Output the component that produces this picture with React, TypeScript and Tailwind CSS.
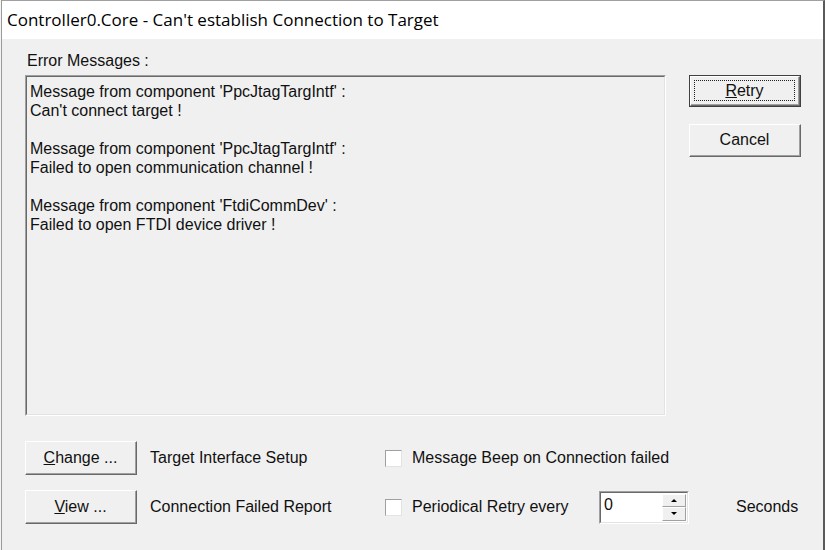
import React from "react";

const MESSAGES = [
  "Message from component 'PpcJtagTargIntf' :",
  "Can't connect target !",
  "",
  "Message from component 'PpcJtagTargIntf' :",
  "Failed to open communication channel !",
  "",
  "Message from component 'FtdiCommDev' :",
  "Failed to open FTDI device driver !",
];

function Button({ children, isDefault = false, className = "" }: { children: React.ReactNode; isDefault?: boolean; className?: string }) {
  return (
    <div className={`${isDefault ? "border border-[#404040]" : ""} ${className}`}>
      <div className="h-full border-t border-l border-white border-r border-b border-r-[#696969] border-b-[#696969] bg-[#f0f0f0]">
        <div className="h-full border-r border-b border-r-[#a0a0a0] border-b-[#a0a0a0] flex items-center justify-center p-[3px]">
          <div className={`w-full h-full flex items-center justify-center ${isDefault ? "border border-dotted border-[#202020]" : ""}`}>
            {children}
          </div>
        </div>
      </div>
    </div>
  );
}

function Sunken({ children, className = "" }: { children?: React.ReactNode; className?: string }) {
  return (
    <div className={`border-t border-l border-[#a0a0a0] border-r border-b border-r-white border-b-white ${className}`}>
      <div className="w-full h-full border-t border-l border-[#696969] border-r border-b border-r-[#e3e3e3] border-b-[#e3e3e3]">
        {children}
      </div>
    </div>
  );
}

function Checkbox({ label }: { label: string }) {
  return (
    <div className="flex items-center">
      <div className="w-[17px] h-[17px] bg-white border-t border-l border-[#a0a0a0] border-r border-b border-r-[#e3e3e3] border-b-[#e3e3e3]" />
      <span className="ml-[10px]">{label}</span>
    </div>
  );
}

export default function App() {
  return (
    <div className="w-[825px] h-[550px] flex overflow-hidden bg-white" style={{ fontFamily: '"Liberation Sans", Arial, sans-serif' }}>
      <div className="w-[2px] h-full bg-[#f4f4f4] border-r border-[#9a9a9a]" />
      <div className="flex-1 flex flex-col border-t border-[#a0a0a0] border-r-2 border-r-[#5a5a5a]">
        <div className="h-[38px] bg-white flex items-center pl-[5px] text-[17px] text-black" style={{ fontFamily: '"Open Sans", "Noto Sans", sans-serif' }}>
          Controller0.Core - Can't establish Connection to Target
        </div>
        <div className="flex-1 bg-[#f0f0f0] pl-[23px] pr-[20px] text-[16px] text-[#101010]">
          <div className="pt-[13px] pl-[2px] h-[36px] leading-[17px]">Error Messages :</div>
          <div className="flex">
            <Sunken className="w-[641px] h-[341px]">
              <div className="pl-[3px] pt-[5px] leading-[19px]">
                {MESSAGES.map((m, i) => (
                  <div key={i} className="h-[19px]">{m}</div>
                ))}
              </div>
            </Sunken>
            <div className="ml-[23px] flex flex-col">
              <Button isDefault className="w-[112px] h-[32px]">
                <span><span className="underline">R</span>etry</span>
              </Button>
              <Button className="w-[112px] h-[33px] mt-[17px]">Cancel</Button>
            </div>
          </div>
          <div className="mt-[25px] flex items-center h-[34px]">
            <Button className="w-[112px] h-[34px]">
              <span><span className="underline">C</span>hange ...</span>
            </Button>
            <span className="ml-[13px] w-[235px]">Target Interface Setup</span>
            <Checkbox label="Message Beep on Connection failed" />
          </div>
          <div className="mt-[15px] flex items-center h-[34px]">
            <Button className="w-[112px] h-[34px]">
              <span><span className="underline">V</span>iew ...</span>
            </Button>
            <span className="ml-[13px] w-[235px]">Connection Failed Report</span>
            <div className="w-[214px]">
              <Checkbox label="Periodical Retry every" />
            </div>
            <Sunken className="w-[90px] h-[33px] bg-white">
              <div className="h-full flex bg-white">
                <div className="flex-1 pl-[3px] pt-[2px] leading-[20px]">0</div>
                <div className="w-[24px] flex flex-col mr-[1px] my-[1px]">
                  <div className="flex-1 bg-[#f0f0f0] border-t border-l border-white border-r border-b border-r-[#a0a0a0] border-b-[#a0a0a0] flex items-center justify-center">
                    <div className="w-0 h-0 border-l-[3px] border-r-[3px] border-b-[3px] border-l-transparent border-r-transparent border-b-black" />
                  </div>
                  <div className="flex-1 bg-[#f0f0f0] border-t border-l border-white border-r border-b border-r-[#a0a0a0] border-b-[#a0a0a0] flex items-center justify-center">
                    <div className="w-0 h-0 border-l-[3px] border-r-[3px] border-t-[3px] border-l-transparent border-r-transparent border-t-black" />
                  </div>
                </div>
              </div>
            </Sunken>
            <span className="ml-[47px]">Seconds</span>
          </div>
        </div>
      </div>
    </div>
  );
}
